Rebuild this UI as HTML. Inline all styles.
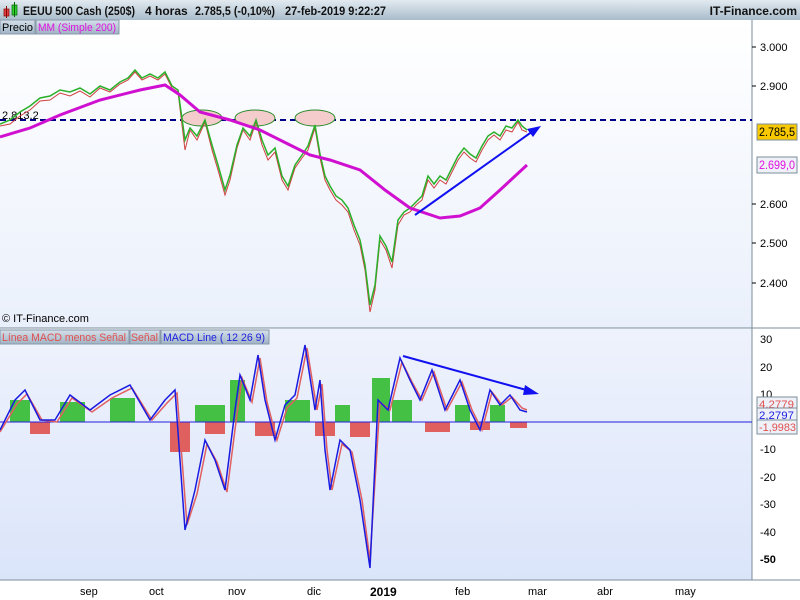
<!DOCTYPE html>
<html><head><style>
body{margin:0;width:800px;height:600px;overflow:hidden;font-family:"Liberation Sans",sans-serif;background:#fff}
svg{display:block}
</style></head><body>
<svg width="800" height="600" xmlns="http://www.w3.org/2000/svg" font-family="Liberation Sans, sans-serif">
<defs>
<linearGradient id="hd" x1="0" y1="0" x2="0" y2="1"><stop offset="0" stop-color="#e2eaf0"/><stop offset="1" stop-color="#a9bccb"/></linearGradient>
<linearGradient id="p1" x1="0" y1="0" x2="0" y2="1"><stop offset="0" stop-color="#ffffff"/><stop offset="1" stop-color="#eaf0fb"/></linearGradient>
<linearGradient id="p2" x1="0" y1="0" x2="0" y2="1"><stop offset="0" stop-color="#eef2fc"/><stop offset="1" stop-color="#dbe5fa"/></linearGradient>
<linearGradient id="tb" x1="0" y1="0" x2="0" y2="1"><stop offset="0" stop-color="#d6e0ea"/><stop offset="1" stop-color="#9fb3c4"/></linearGradient>
</defs>
<rect x="0" y="0" width="800" height="20" fill="url(#hd)"/>
<rect x="4" y="9" width="5" height="7" fill="#e04040" stroke="#800" stroke-width="0.7"/><line x1="6.5" y1="6" x2="6.5" y2="18" stroke="#800"/>
<rect x="12" y="5" width="5" height="10" fill="#30d030" stroke="#060" stroke-width="0.7"/><line x1="14.5" y1="2" x2="14.5" y2="17" stroke="#060"/>
<g font-size="12" font-weight="bold" fill="#111">
<text x="23" y="15" textLength="112" lengthAdjust="spacingAndGlyphs">EEUU 500 Cash (250$)</text>
<text x="145" y="15">4 horas</text>
<text x="195" y="15" textLength="80" lengthAdjust="spacingAndGlyphs">2.785,5 (-0,10%)</text>
<text x="285" y="15" textLength="101" lengthAdjust="spacingAndGlyphs">27-feb-2019 9:22:27</text>
<text x="797" y="15" text-anchor="end">IT-Finance.com</text></g>
<rect x="0" y="20" width="752" height="308" fill="url(#p1)"/>
<rect x="0" y="329" width="752" height="251" fill="url(#p2)"/>
<rect x="752" y="20" width="48" height="560" fill="#fff"/>
<line x1="752" y1="20" x2="752" y2="580" stroke="#7a8c99"/>
<line x1="0" y1="328" x2="800" y2="328" stroke="#7a8c99"/>
<line x1="0" y1="580" x2="800" y2="580" stroke="#7a8c99"/>
<rect x="0" y="581" width="800" height="19" fill="#fff"/>
<!-- tabs -->
<rect x="0" y="20" width="35" height="14" fill="url(#tb)" stroke="#8899aa"/><text x="2" y="31" font-size="11" fill="#000" textLength="31" lengthAdjust="spacingAndGlyphs">Precio</text>
<rect x="36" y="20" width="83" height="14" fill="url(#tb)" stroke="#8899aa"/><text x="38" y="31" font-size="11" fill="#e010e0" textLength="78" lengthAdjust="spacingAndGlyphs">MM (Simple 200)</text>
<rect x="0" y="330" width="129" height="14" fill="url(#tb)" stroke="#8899aa"/><text x="2" y="341" font-size="11" fill="#e05050" textLength="124" lengthAdjust="spacingAndGlyphs">Línea MACD menos Señal</text>
<rect x="130" y="330" width="30" height="14" fill="url(#tb)" stroke="#8899aa"/><text x="131" y="341" font-size="11" fill="#e05050" textLength="27" lengthAdjust="spacingAndGlyphs">Señal</text>
<rect x="161" y="330" width="108" height="14" fill="url(#tb)" stroke="#8899aa"/><text x="163" y="341" font-size="11" fill="#2020e0" textLength="102" lengthAdjust="spacingAndGlyphs">MACD Line ( 12 26 9)</text>
<text x="2" y="322" font-size="11" fill="#000">© IT-Finance.com</text>
<!-- price axis -->
<g font-size="11" fill="#000"><line x1="752" y1="47" x2="756" y2="47" stroke="#000"/><text x="760" y="51">3.000</text>
<line x1="752" y1="86" x2="756" y2="86" stroke="#000"/><text x="760" y="90">2.900</text>
<line x1="752" y1="204" x2="756" y2="204" stroke="#000"/><text x="760" y="208">2.600</text>
<line x1="752" y1="243" x2="756" y2="243" stroke="#000"/><text x="760" y="247">2.500</text>
<line x1="752" y1="283" x2="756" y2="283" stroke="#000"/><text x="760" y="287">2.400</text></g>
<rect x="757" y="124" width="40" height="16" fill="#f8c800" stroke="#7a8c99"/><text x="759" y="136" font-size="12" fill="#000" textLength="36" lengthAdjust="spacingAndGlyphs">2.785,5</text>
<rect x="757" y="157" width="40" height="16" fill="#eef2f8" stroke="#7a8c99"/><text x="759" y="169" font-size="12" fill="#e010e0" textLength="36" lengthAdjust="spacingAndGlyphs">2.699,0</text>
<text x="2" y="119" font-size="11" fill="#000">2.813,2</text>
<line x1="0" y1="120" x2="752" y2="120" stroke="#00008b" stroke-width="2" stroke-dasharray="6,4"/>
<g fill="#f4cccc" stroke="#2a8a2a" stroke-width="1"><ellipse cx="202" cy="118" rx="20" ry="8"/><ellipse cx="255" cy="118" rx="20" ry="8"/><ellipse cx="315" cy="118" rx="20" ry="8"/></g>
<polyline fill="none" stroke="#d04040" stroke-width="1" points="0,126 10,124 20,116 30,110 40,101 50,100 60,93 70,96 80,91 90,97 100,88 110,92 120,84 128,80 135,72 142,80 150,76 158,80 165,74 172,88 178,92 185,150 190,130 197,140 205,122 212,150 218,170 225,195 230,180 237,148 243,130 250,140 256,122 262,145 268,160 275,152 282,180 288,190 295,168 302,158 308,150 315,128 320,158 325,180 330,190 336,200 342,205 348,212 354,230 360,245 365,270 370,312 375,290 380,240 386,250 392,268 398,225 404,215 410,212 416,205 422,200 428,180 434,188 440,180 446,184 452,172 458,160 464,152 470,158 476,162 482,150 488,140 494,135 500,140 506,130 512,132 518,122 522,130 527,132"/>
<polyline fill="none" stroke="#2ab02a" stroke-width="1.5" points="0,124 10,120 20,112 30,106 40,98 50,96 60,90 70,92 80,88 90,94 100,86 110,90 120,82 128,78 135,70 142,78 150,74 158,78 165,72 172,86 178,90 185,140 190,128 197,136 205,120 212,145 218,165 225,190 230,175 237,145 243,128 250,136 256,120 262,140 268,155 275,148 282,176 288,186 295,165 302,155 308,146 315,125 320,154 325,176 330,186 336,196 342,200 348,208 354,225 360,240 365,265 370,305 375,285 380,236 386,246 392,262 398,220 404,212 410,208 416,202 422,196 428,176 434,184 440,176 446,180 452,168 458,156 464,148 470,154 476,158 482,146 488,136 494,132 500,136 506,126 512,128 518,120 522,126 527,130"/>
<polyline fill="none" stroke="#d010d0" stroke-width="3" points="0,137 30,128 60,115 100,100 140,90 165,85 180,95 200,112 230,120 260,130 290,145 310,155 330,160 360,170 385,190 410,208 440,218 460,216 480,208 500,190 527,165"/>
<line x1="415" y1="215" x2="533" y2="131" stroke="#1010f0" stroke-width="2"/><polygon points="541,126 527,129 533,137" fill="#1010f0"/>
<!-- MACD -->
<g font-size="11" fill="#000">
<text x="760" y="343">30</text><text x="760" y="371">20</text><text x="760" y="398">10</text><text x="760" y="453">-10</text><text x="760" y="481">-20</text><text x="760" y="508">-30</text><text x="760" y="536">-40</text><text x="760" y="563" font-weight="bold">-50</text></g>
<rect x="757" y="397" width="40" height="14" fill="#eef2f8" stroke="#7a8c99"/><text x="759" y="408" font-size="11" fill="#e05050" textLength="35" lengthAdjust="spacingAndGlyphs">4,2779</text>
<rect x="757" y="408" width="40" height="14" fill="#eef2f8" stroke="#7a8c99"/><text x="759" y="419" font-size="11" fill="#2020e0" textLength="35" lengthAdjust="spacingAndGlyphs">2,2797</text>
<rect x="757" y="420" width="40" height="14" fill="#eef2f8" stroke="#7a8c99"/><text x="759" y="431" font-size="11" fill="#e05050" textLength="37" lengthAdjust="spacingAndGlyphs">-1,9983</text>
<g fill="#44c044">
<rect x="10" y="400" width="20" height="22"/><rect x="60" y="402" width="25" height="20"/><rect x="110" y="398" width="25" height="24"/><rect x="195" y="405" width="30" height="17"/><rect x="230" y="380" width="15" height="42"/><rect x="285" y="400" width="25" height="22"/><rect x="335" y="405" width="15" height="17"/><rect x="372" y="378" width="18" height="44"/><rect x="392" y="400" width="20" height="22"/><rect x="455" y="405" width="15" height="17"/><rect x="490" y="405" width="15" height="17"/></g>
<g fill="#e06060">
<rect x="30" y="422" width="20" height="12"/><rect x="170" y="422" width="20" height="30"/><rect x="205" y="422" width="20" height="12"/><rect x="255" y="422" width="20" height="14"/><rect x="315" y="422" width="20" height="14"/><rect x="350" y="422" width="20" height="15"/><rect x="425" y="422" width="25" height="10"/><rect x="470" y="422" width="20" height="8"/><rect x="510" y="422" width="17" height="6"/></g>
<line x1="0" y1="422" x2="752" y2="422" stroke="#2020e0" stroke-width="1"/>
<polyline fill="none" stroke="#e06060" stroke-width="1.5" points="0,432 17,404 27,394 42,420 57,422 72,398 92,412 112,398 132,388 152,420 167,403 177,393 187,525 197,494 207,444 217,462 227,492 237,414 242,378 252,402 260,358 267,402 277,440 287,408 297,398 307,348 317,410 322,384 327,450 332,490 342,444 352,452 362,500 370,560 380,402 390,410 402,362 412,382 422,400 434,372 447,410 462,382 472,410 482,430 492,392 502,405 512,397 522,408 527,410"/>
<polyline fill="none" stroke="#1a1ae0" stroke-width="1.5" points="0,430 15,400 25,390 40,420 55,420 70,395 90,410 110,395 130,385 150,420 165,400 175,390 185,530 195,490 205,440 215,460 225,490 235,410 240,375 250,400 258,355 265,400 275,440 285,405 295,395 305,345 315,410 320,380 325,450 330,490 340,440 350,450 360,500 370,568 378,400 388,410 400,358 410,380 420,400 432,370 445,410 460,380 470,410 480,430 490,390 500,405 510,395 520,410 527,412"/>
<line x1="403" y1="356" x2="530" y2="391" stroke="#1010f0" stroke-width="2"/><polygon points="539,394 525,385 523,395" fill="#1010f0"/>
<g font-size="11" fill="#000"><text x="80" y="595">sep</text><text x="149" y="595">oct</text><text x="228" y="595">nov</text><text x="307" y="595">dic</text><text x="370" y="596" font-weight="bold" font-size="12">2019</text><text x="455" y="595">feb</text><text x="528" y="595">mar</text><text x="597" y="595">abr</text><text x="675" y="595">may</text></g>
</svg>
</body></html>
